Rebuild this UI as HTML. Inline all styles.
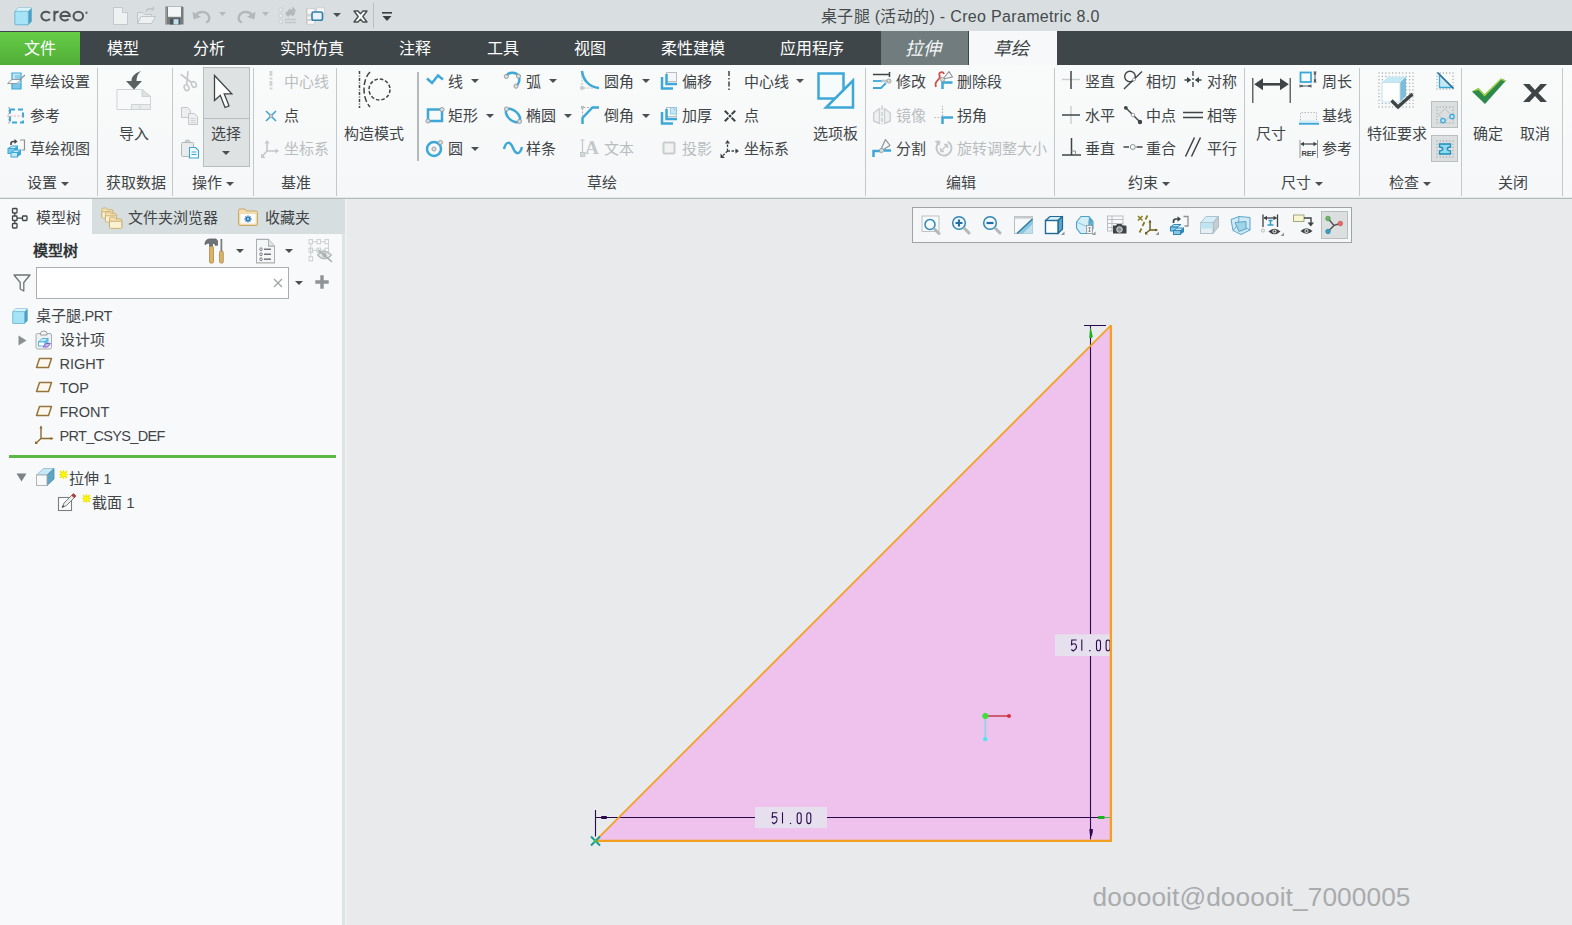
<!DOCTYPE html>
<html lang="zh-CN"><head><meta charset="utf-8"><title>Creo Parametric</title>
<style>
html,body{margin:0;padding:0}
body{width:1572px;height:925px;position:relative;overflow:hidden;background:#e8eaec;
font-family:"Liberation Sans",sans-serif;}
body>div,body>span,body>svg{position:absolute;display:block}
body>span{white-space:nowrap}
svg{overflow:visible}
</style></head><body>
<div style="left:0px;top:0px;width:1572px;height:31px;background:#d9dfe0"></div>
<svg style="left:14.0px;top:5.5px" width="19" height="20" viewBox="0 0 19 20"><path d="M1 5.2L4.2 2H17.5V15.5L14.3 18.7H1Z" fill="#4f9dc0" stroke="#5fb3d3" stroke-width="0.8" stroke-linejoin="round"/><path d="M1 5.2L4.2 2H17.5L14.3 5.2Z" fill="#daf4fc"/><rect x="1" y="5.2" width="13.3" height="13.5" rx="1" fill="#a6e3f7" stroke="#5fb3d3" stroke-width="0.6"/></svg>
<svg style="left:0px;top:0px" width="100" height="31" viewBox="0 0 100 31"><g fill="none" stroke="#4d5356" stroke-width="2"><path d="M49.900 13.200A4.850 4.400 0 1 0 49.900 18.900"/><path d="M54.400 10.800V21.300M54.400 15.300Q54.700 11.600 58.700 11.700"/><path d="M60.400 16.050H69.850A4.750 4.400 0 1 0 68.600 19.100"/><ellipse cx="78.300" cy="16.050" rx="4.800" ry="4.400"/></g><circle cx="86.500" cy="12.800" r="1.200" fill="#6a7073"/></svg>
<svg style="left:111.5px;top:5.5px" width="17" height="20" viewBox="0 0 17 20"><path d="M1.5 1.5H10.5L15.5 6.5V18.5H1.5Z" fill="#eef0f1" stroke="#c3c8ca" stroke-width="1"/><path d="M10.5 1.5V6.5H15.5" fill="#dfe3e4" stroke="#c3c8ca" stroke-width="1"/></svg>
<svg style="left:136.0px;top:5.5px" width="21" height="20" viewBox="0 0 21 20"><path d="M1.5 17.5V6.5H7L9 8.5H15.5V17.5Z" fill="#e6e9ea" stroke="#c0c5c7"/><path d="M1.5 17.5L5 10.5H19.5L15.5 17.5Z" fill="#eef0f1" stroke="#c0c5c7"/><path d="M10 5.5C11.5 2.5 14.5 2 17 3.2M17.5 0.8V3.6H14.6" fill="none" stroke="#c0c5c7" stroke-width="1.4"/></svg>
<svg style="left:165.0px;top:6.0px" width="19" height="19" viewBox="0 0 19 19"><path d="M0.5 0.5H17.500L18.500 1.500V18.500H0.500Z" fill="#767b7e"/><path d="M0.500 0.500H1.800V18.500H0.500Z" fill="#9a9fa1"/><rect x="3" y="0.800" width="13" height="10" fill="#f3f5f6"/><rect x="5" y="12.500" width="10" height="6" fill="#4e5356"/><rect x="8.500" y="13.200" width="5" height="5.300" fill="#bfe0ec"/></svg>
<svg style="left:191.5px;top:9.0px" width="20" height="14" viewBox="0 0 20 14"><path d="M3.5 6.5C7 1.5 15 2 17 7.5C18 10.5 16.5 12.5 14 13.5" fill="none" stroke="#b3b8ba" stroke-width="2.4"/><path d="M0.5 2.5L1.5 10.5L9 8Z" fill="#b3b8ba"/></svg>
<svg style="left:218.5px;top:12.0px" width="7" height="4" viewBox="0 0 7 4"><path d="M0 0H7L3.5 4Z" fill="#b4babc"/></svg>
<svg style="left:235.5px;top:9.0px" width="20" height="14" viewBox="0 0 20 14"><g transform="translate(20,0) scale(-1,1)"><path d="M3.5 6.5C7 1.5 15 2 17 7.5C18 10.5 16.5 12.5 14 13.5" fill="none" stroke="#b3b8ba" stroke-width="2.4"/><path d="M0.5 2.5L1.5 10.5L9 8Z" fill="#b3b8ba"/></g></svg>
<svg style="left:262.0px;top:12.0px" width="7" height="4" viewBox="0 0 7 4"><path d="M0 0H7L3.5 4Z" fill="#b4babc"/></svg>
<svg style="left:278.0px;top:5.5px" width="20" height="20" viewBox="0 0 20 20"><rect x="1" y="2" width="3.400" height="3.400" rx="0.600" fill="#e9ecec" stroke="#c3c8ca" stroke-width="0.800"/><rect x="1" y="8" width="3.400" height="3.400" rx="0.600" fill="#e9ecec" stroke="#c3c8ca" stroke-width="0.800"/><rect x="1" y="14" width="3.400" height="3.400" rx="0.600" fill="#e9ecec" stroke="#c3c8ca" stroke-width="0.800"/><path d="M7 13.500H18M7 16.500H18" stroke="#c3c8ca" stroke-width="1.500"/><path d="M7 7.500L12 2.500L13.800 4.300L14.500 0.500L18.500 5L16 5.500L17.500 7L14.500 10.500L12.500 8.500L10 11Z" fill="#b3b8ba"/></svg>
<svg style="left:305.5px;top:6.5px" width="20" height="18" viewBox="0 0 20 18"><rect x="0.800" y="1.500" width="8" height="6" fill="#f4f6f7" stroke="#c9cdcf" stroke-width="0.800"/><rect x="10.500" y="0.800" width="8" height="6.500" fill="#f4f6f7" stroke="#c9cdcf" stroke-width="0.800"/><rect x="0.800" y="9" width="7" height="3.500" fill="#f4f6f7" stroke="#c9cdcf" stroke-width="0.800"/><rect x="0.800" y="13.500" width="8" height="3.800" fill="#f4f6f7" stroke="#c9cdcf" stroke-width="0.800"/><path d="M0.800 1.500V17" stroke="#d8a8a0" stroke-width="0.600"/><rect x="6" y="5" width="10.500" height="8.200" rx="1.800" fill="#e9f1fa" stroke="#2f7fa8" stroke-width="1.600"/></svg>
<svg style="left:333.0px;top:12.8px" width="8" height="4" viewBox="0 0 8 4"><path d="M0 0H8L4.0 4Z" fill="#4a4f52"/></svg>
<svg style="left:352.5px;top:9.5px" width="15" height="13" viewBox="0 0 15 13"><path d="M1 1H5L7.500 3.800L10 1H14L9.800 6.500L14 12H10L7.500 9.200L5 12H1L5.200 6.500Z" fill="#fbfcfc" stroke="#4a4f52" stroke-width="1.400" stroke-linejoin="round"/></svg>
<div style="left:373px;top:3px;width:1px;height:25px;background:#b9c0c2"></div>
<svg style="left:381.5px;top:12px" width="10" height="10" viewBox="0 0 10 10"><path d="M0 0.8H10" stroke="#3a3f42" stroke-width="1.6"/><path d="M0.5 4H9.5L5 9Z" fill="#3a3f42"/></svg>
<span style="left:821px;top:5.5px;font-size:16px;line-height:22px;color:#454a4d;letter-spacing:0.33px">桌子腿 (活动的) - Creo Parametric 8.0</span>
<div style="left:0px;top:31px;width:1572px;height:34px;background:#3e4649"></div>
<div style="left:0px;top:32px;width:80px;height:33px;background:linear-gradient(180deg,#66cd46 0%,#5bbd3f 50%,#51ac37 100%)"></div>
<span style="left:24px;top:37.5px;font-size:16px;line-height:22px;color:#ffffff;">文件</span>
<span style="left:106.5px;top:37.5px;font-size:16px;line-height:22px;color:#ffffff;">模型</span>
<span style="left:193px;top:37.5px;font-size:16px;line-height:22px;color:#ffffff;">分析</span>
<span style="left:280px;top:37.5px;font-size:16px;line-height:22px;color:#ffffff;">实时仿真</span>
<span style="left:399px;top:37.5px;font-size:16px;line-height:22px;color:#ffffff;">注释</span>
<span style="left:486.5px;top:37.5px;font-size:16px;line-height:22px;color:#ffffff;">工具</span>
<span style="left:573.5px;top:37.5px;font-size:16px;line-height:22px;color:#ffffff;">视图</span>
<span style="left:660.5px;top:37.5px;font-size:16px;line-height:22px;color:#ffffff;">柔性建模</span>
<span style="left:779.5px;top:37.5px;font-size:16px;line-height:22px;color:#ffffff;">应用程序</span>
<div style="left:881px;top:31px;width:87px;height:34px;background:#707c7d"></div>
<div style="left:968px;top:31px;width:1px;height:34px;background:#3e4649"></div>
<div style="left:969px;top:31px;width:88px;height:34px;background:#f6f8f9"></div>
<span style="left:905.5px;top:36.5px;font-size:18px;line-height:24px;color:#f4f6f7;transform:skewX(-14deg)">拉伸</span>
<span style="left:993.5px;top:36.5px;font-size:18px;line-height:24px;color:#3c4144;transform:skewX(-14deg)">草绘</span>
<div style="left:0px;top:65px;width:1572px;height:133px;background:linear-gradient(180deg,#f9fbfb 0%,#f5f7f8 100%)"></div>
<div style="left:0px;top:197px;width:1572px;height:1px;background:#e4e8e9"></div>
<div style="left:0px;top:198px;width:1572px;height:1px;background:#b4b9bb"></div>
<div style="left:97px;top:68px;width:1px;height:128px;background:#c3c8ca"></div>
<div style="left:172px;top:68px;width:1px;height:128px;background:#c3c8ca"></div>
<div style="left:253px;top:68px;width:1px;height:128px;background:#c3c8ca"></div>
<div style="left:336px;top:68px;width:1px;height:128px;background:#c3c8ca"></div>
<div style="left:865px;top:68px;width:1px;height:128px;background:#c3c8ca"></div>
<div style="left:1054px;top:68px;width:1px;height:128px;background:#c3c8ca"></div>
<div style="left:1244px;top:68px;width:1px;height:128px;background:#c3c8ca"></div>
<div style="left:1359px;top:68px;width:1px;height:128px;background:#c3c8ca"></div>
<div style="left:1461px;top:68px;width:1px;height:128px;background:#c3c8ca"></div>
<div style="left:1562px;top:68px;width:1px;height:128px;background:#c3c8ca"></div>
<div style="left:416.5px;top:72px;width:2px;height:89px;background:#b4b9bb"></div>
<svg style="left:6.0px;top:70.5px" width="20" height="20" viewBox="0 0 20 20"><path d="M6 2H15V13H6Z" fill="#c6e8f5" stroke="#3da8d8" stroke-width="1.2"/><path d="M6 12V18H15V13" fill="#7cc8e8" stroke="#3da8d8" stroke-width="1.2"/><path d="M1.5 12.5L6 8.5H15L11 12.5Z" fill="#fafbfb" stroke="#8d9294" stroke-width="0.9"/><path d="M13.5 9L19 4" stroke="#8d9294" stroke-width="1.2"/><path d="M9 5H14M9 7H14" stroke="#3da8d8" stroke-width="0.8"/></svg>
<span style="left:30px;top:72.0px;font-size:15px;line-height:20px;color:#3f4447;">草绘设置</span>
<svg style="left:6.0px;top:106.0px" width="20" height="20" viewBox="0 0 20 20"><rect x="4" y="3.5" width="13" height="13" fill="none" stroke="#3da8d8" stroke-width="2" stroke-dasharray="5 3"/><path d="M3 1V19" stroke="#8d9294" stroke-width="1" stroke-dasharray="1.5 1.5"/><path d="M1 10H19" stroke="#e0a8a8" stroke-width="0.9" stroke-dasharray="2 1.5"/></svg>
<span style="left:30px;top:106.0px;font-size:15px;line-height:20px;color:#3f4447;">参考</span>
<svg style="left:6.0px;top:138.0px" width="20" height="20" viewBox="0 0 20 20"><path d="M2 10.5L6 8H12L8.5 10.5Z" fill="#c6e8f5" stroke="#3da8d8"/><rect x="2" y="10.5" width="6.5" height="5" fill="#7cc8e8" stroke="#3da8d8"/><path d="M8.500 10.5L12 8V13L8.5 15.500Z" fill="#3da8d8"/><path d="M5 14.5L9 12H15L11.5 14.5Z" fill="#c6e8f5" stroke="#3da8d8"/><rect x="5" y="14.5" width="6.5" height="4.5" fill="#c6e8f5" stroke="#3da8d8"/><path d="M11.5 14.5L15 12V16.500L11.5 19Z" fill="#3da8d8"/><path d="M5 7V5.500Q5 3.500 7.5 3.500H9" fill="none" stroke="#3f4446" stroke-width="1.6"/><path d="M8.500 1L11.5 3.500L8.500 6Z" fill="#3f4446"/><path d="M14 2H18.500V12H15.500" fill="none" stroke="#8d9294" stroke-width="1.2"/></svg>
<span style="left:30px;top:139.0px;font-size:15px;line-height:20px;color:#3f4447;">草绘视图</span>
<span style="left:26.5px;top:173.0px;font-size:15px;line-height:20px;color:#3f4447;">设置</span>
<svg style="left:60.5px;top:181.5px" width="8" height="4" viewBox="0 0 8 4"><path d="M0 0H8L4.0 4Z" fill="#4a4f52"/></svg>
<svg style="left:114.5px;top:70.0px" width="38" height="40" viewBox="0 0 38 40"><path d="M2 19.500H27L35.500 26.500V39.500H2Z" fill="#f8f9fa" stroke="#cfd3d5"/><path d="M27 19.500V26.500H35.500Z" fill="#dde1e3" stroke="#cfd3d5"/><path d="M16.500 34.500H35.500V39.500H16.500Z" fill="#e9ecec" stroke="#cfd3d5"/><path d="M25 34.500V39.500" stroke="#cfd3d5"/><path d="M26 1C19 3.500 16.500 7 16.500 11H11L19 19.500L27 11H21.500C21.500 7.500 22.500 4 26 1Z" fill="#5b6063"/></svg>
<span style="left:118.5px;top:123.5px;font-size:15px;line-height:20px;color:#3f4447;">导入</span>
<span style="left:105.5px;top:173.0px;font-size:15px;line-height:20px;color:#3f4447;">获取数据</span>
<svg style="left:179.0px;top:70.5px" width="18" height="20" viewBox="0 0 18 20"><g transform="rotate(-24 9 10)"><path d="M5 1L11.500 12.500M13 1L6.500 12.500" stroke="#c3c7c9" stroke-width="1.600"/><ellipse cx="5" cy="15.500" rx="2.300" ry="3" fill="none" stroke="#c3c7c9" stroke-width="1.500"/><ellipse cx="13" cy="15.500" rx="2.300" ry="3" fill="none" stroke="#c3c7c9" stroke-width="1.500"/></g></svg>
<svg style="left:180.0px;top:106.0px" width="19" height="20" viewBox="0 0 19 20"><path d="M1.500 1.500H7.500L10.500 4.500V11.500H1.500Z" fill="#eceeef" stroke="#c3c7c9"/><path d="M8.500 7.500H14.500L17.500 10.500V18.500H8.500Z" fill="#eceeef" stroke="#c3c7c9"/><path d="M10.500 12.500H15.500M10.500 14.500H15.500M10.500 16.500H15.500" stroke="#c9cdcf" stroke-width="0.8"/></svg>
<svg style="left:179.5px;top:139.0px" width="20" height="20" viewBox="0 0 20 20"><rect x="1.500" y="3.500" width="12" height="14" rx="1" fill="#e9ebec" stroke="#b3b8ba"/><path d="M5 3.500Q5 1 7.500 1Q10 1 10 3.500Z" fill="#d5d8da" stroke="#b3b8ba"/><path d="M9.500 8.500H15.500L18.500 11.500V19H9.500Z" fill="#f6fbfd" stroke="#3da8d8" stroke-width="1.1"/><path d="M11.500 13H16.500M11.500 15.500H16.500" stroke="#3da8d8" stroke-width="1"/></svg>
<div style="left:203px;top:67px;width:47px;height:100px;background:#dfe2e3;border:1px solid #b8bdbf;box-sizing:border-box"></div>
<div style="left:204px;top:118px;width:45px;height:1px;background:#b8bdbf"></div>
<svg style="left:212.5px;top:74.0px" width="20" height="36" viewBox="0 0 20 36"><path d="M1.500 1.500V26.500L7.300 21.300L12 33.500L16 31.800L11.200 19.800H18.800Z" fill="#fff" stroke="#3f4446" stroke-width="1.300" stroke-linejoin="miter"/></svg>
<span style="left:211px;top:123.5px;font-size:15px;line-height:20px;color:#3f4447;">选择</span>
<svg style="left:222.0px;top:150.5px" width="8" height="4" viewBox="0 0 8 4"><path d="M0 0H8L4.0 4Z" fill="#4a4f52"/></svg>
<span style="left:191.5px;top:173.0px;font-size:15px;line-height:20px;color:#3f4447;">操作</span>
<svg style="left:225.5px;top:181.5px" width="8" height="4" viewBox="0 0 8 4"><path d="M0 0H8L4.0 4Z" fill="#4a4f52"/></svg>
<svg style="left:268.5px;top:71.0px" width="4" height="20" viewBox="0 0 4 20"><path d="M2 0V20" stroke="#d0d3d5" stroke-width="2.800" stroke-dasharray="5 1.500 2 1.500"/></svg>
<span style="left:284px;top:72.0px;font-size:15px;line-height:20px;color:#b9bdbf;">中心线</span>
<svg style="left:264.5px;top:109.5px" width="12" height="12" viewBox="0 0 12 12"><path d="M1 1L11 11M11 1L1 11" stroke="#3da8d8" stroke-width="1.600"/><circle cx="6" cy="6" r="1.800" fill="#c9cdcf" stroke="#8d9294" stroke-width="0.600"/></svg>
<span style="left:284px;top:106.0px;font-size:15px;line-height:20px;color:#3f4447;">点</span>
<svg style="left:260.0px;top:138.5px" width="20" height="20" viewBox="0 0 20 20"><path d="M7 12V2M7 12H18M7 12L1.500 18" fill="none" stroke="#c3c7c9" stroke-width="1.600"/><path d="M4.500 4.500L7 1L9.500 4.500ZM15.500 9.500L19 12L15.500 14.500ZM1 14.500V19H5.500Z" fill="#c3c7c9"/></svg>
<span style="left:284px;top:139.0px;font-size:15px;line-height:20px;color:#b9bdbf;">坐标系</span>
<span style="left:280.5px;top:173.0px;font-size:15px;line-height:20px;color:#3f4447;">基准</span>
<svg style="left:356.5px;top:71.0px" width="36" height="38" viewBox="0 0 36 38"><path d="M2.500 0V37" stroke="#3f4446" stroke-width="1.500" stroke-dasharray="3 1.500 1 1.500"/><path d="M13 1C5 9 5 27 13 36" fill="none" stroke="#3f4446" stroke-width="1.500" stroke-dasharray="6 2.500"/><circle cx="22.500" cy="18.500" r="10.500" fill="none" stroke="#3f4446" stroke-width="1.500" stroke-dasharray="3.500 2"/></svg>
<span style="left:344px;top:123.5px;font-size:15px;line-height:20px;color:#3f4447;">构造模式</span>
<svg style="left:425.5px;top:73.5px" width="18" height="10" viewBox="0 0 18 10"><path d="M1 4.500L6 9L12 1.500L17 5.500" fill="none" stroke="#3da8d8" stroke-width="2.500" stroke-linejoin="miter"/></svg>
<span style="left:448px;top:72.0px;font-size:15px;line-height:20px;color:#3f4447;">线</span>
<svg style="left:471.0px;top:79.0px" width="8" height="4" viewBox="0 0 8 4"><path d="M0 0H8L4.0 4Z" fill="#4a4f52"/></svg>
<svg style="left:424.5px;top:106.0px" width="20" height="18" viewBox="0 0 20 18"><rect x="3" y="3.500" width="14" height="11.500" fill="none" stroke="#3da8d8" stroke-width="2.500"/><circle cx="17" cy="3.5" r="2.1" fill="#d8dadb" stroke="#8d9294" stroke-width="0.8"/><circle cx="3" cy="15" r="2.1" fill="#d8dadb" stroke="#8d9294" stroke-width="0.8"/></svg>
<span style="left:448px;top:106.0px;font-size:15px;line-height:20px;color:#3f4447;">矩形</span>
<svg style="left:486.0px;top:113.5px" width="8" height="4" viewBox="0 0 8 4"><path d="M0 0H8L4.0 4Z" fill="#4a4f52"/></svg>
<svg style="left:424.5px;top:139.0px" width="20" height="18" viewBox="0 0 20 18"><circle cx="9" cy="10" r="7" fill="none" stroke="#3da8d8" stroke-width="2.500"/><circle cx="9" cy="10" r="2.1" fill="#d8dadb" stroke="#8d9294" stroke-width="0.8"/><circle cx="15.5" cy="3.5" r="2.1" fill="#d8dadb" stroke="#8d9294" stroke-width="0.8"/></svg>
<span style="left:448px;top:139.0px;font-size:15px;line-height:20px;color:#3f4447;">圆</span>
<svg style="left:471.0px;top:146.5px" width="8" height="4" viewBox="0 0 8 4"><path d="M0 0H8L4.0 4Z" fill="#4a4f52"/></svg>
<svg style="left:503.0px;top:71.0px" width="20" height="18" viewBox="0 0 20 18"><path d="M3.300 5.500C5 0.800 13 0.300 15.500 5C17.300 9 15.800 13 13 15.200" fill="none" stroke="#3da8d8" stroke-width="2.500"/><circle cx="3.3" cy="5.5" r="2.1" fill="#d8dadb" stroke="#8d9294" stroke-width="0.8"/><circle cx="15.5" cy="5.2" r="2.1" fill="#d8dadb" stroke="#8d9294" stroke-width="0.8"/><circle cx="13" cy="15.2" r="2.1" fill="#d8dadb" stroke="#8d9294" stroke-width="0.8"/></svg>
<span style="left:526px;top:72.0px;font-size:15px;line-height:20px;color:#3f4447;">弧</span>
<svg style="left:549.0px;top:79.0px" width="8" height="4" viewBox="0 0 8 4"><path d="M0 0H8L4.0 4Z" fill="#4a4f52"/></svg>
<svg style="left:503.0px;top:106.0px" width="20" height="18" viewBox="0 0 20 18"><ellipse cx="10" cy="9.500" rx="8.500" ry="4.800" transform="rotate(42 10 9.500)" fill="none" stroke="#3da8d8" stroke-width="2.500"/><circle cx="3.5" cy="3" r="2.1" fill="#d8dadb" stroke="#8d9294" stroke-width="0.8"/><circle cx="16.5" cy="15.5" r="2.1" fill="#d8dadb" stroke="#8d9294" stroke-width="0.8"/></svg>
<span style="left:526px;top:106.0px;font-size:15px;line-height:20px;color:#3f4447;">椭圆</span>
<svg style="left:564.0px;top:113.5px" width="8" height="4" viewBox="0 0 8 4"><path d="M0 0H8L4.0 4Z" fill="#4a4f52"/></svg>
<svg style="left:503.0px;top:142.0px" width="20" height="12" viewBox="0 0 20 12"><path d="M1 7C3 -1 7 -1 10 6C13 13 17 13 19 5" fill="none" stroke="#3da8d8" stroke-width="2.500"/></svg>
<span style="left:526px;top:139.0px;font-size:15px;line-height:20px;color:#3f4447;">样条</span>
<svg style="left:580.0px;top:70.0px" width="20" height="20" viewBox="0 0 20 20"><path d="M2 1C3 10 9 17 19 18" fill="none" stroke="#3da8d8" stroke-width="2.500"/><path d="M2 6V18H14" fill="none" stroke="#b8bcbe" stroke-width="1" stroke-dasharray="2 1.500"/><rect x="0.800" y="16.800" width="2.400" height="2.400" fill="#d0d3d5" stroke="#9a9ea0" stroke-width="0.500"/></svg>
<span style="left:604px;top:72.0px;font-size:15px;line-height:20px;color:#3f4447;">圆角</span>
<svg style="left:642.0px;top:79.0px" width="8" height="4" viewBox="0 0 8 4"><path d="M0 0H8L4.0 4Z" fill="#4a4f52"/></svg>
<svg style="left:580.0px;top:105.0px" width="20" height="20" viewBox="0 0 20 20"><path d="M2.500 19V13L12.500 2.500H19" fill="none" stroke="#3da8d8" stroke-width="2.500"/><path d="M2.500 12V2.500H11" fill="none" stroke="#a9adb0" stroke-width="1" stroke-dasharray="2 1.500"/><rect x="1.300" y="1.300" width="2.400" height="2.400" fill="#d0d3d5" stroke="#9a9ea0" stroke-width="0.500"/></svg>
<span style="left:604px;top:106.0px;font-size:15px;line-height:20px;color:#3f4447;">倒角</span>
<svg style="left:642.0px;top:113.5px" width="8" height="4" viewBox="0 0 8 4"><path d="M0 0H8L4.0 4Z" fill="#4a4f52"/></svg>
<svg style="left:580.0px;top:139.0px" width="20" height="18" viewBox="0 0 20 18"><path d="M2.500 1V15M0.500 1H4.500M0.500 15H4.500" stroke="#c3c7c9" stroke-width="1.200"/><rect x="0.500" y="13.500" width="4.500" height="4" fill="#d5d8da" stroke="#b3b8ba" stroke-width="0.600"/><text x="5" y="15" font-family="Liberation Serif" font-weight="bold" font-size="19" fill="#c3c7c9">A</text></svg>
<span style="left:604px;top:139.0px;font-size:15px;line-height:20px;color:#b9bdbf;">文本</span>
<svg style="left:659.5px;top:70.5px" width="18" height="19" viewBox="0 0 18 19"><rect x="6.500" y="1.500" width="10" height="9" fill="#f4f6f7" stroke="#b3b8ba" stroke-width="0.900"/><path d="M2 6V17.500H13" fill="none" stroke="#3da8d8" stroke-width="2.500"/><path d="M6.500 3V13H17" fill="none" stroke="#3da8d8" stroke-width="2.500"/></svg>
<span style="left:682px;top:72.0px;font-size:15px;line-height:20px;color:#3f4447;">偏移</span>
<svg style="left:659.5px;top:105.5px" width="18" height="19" viewBox="0 0 18 19"><rect x="6.500" y="1.500" width="10" height="9" fill="#f4f6f7" stroke="#b3b8ba" stroke-width="0.900"/><path d="M2 6V17.500H13" fill="none" stroke="#3da8d8" stroke-width="2.500"/><path d="M6.500 3V13H17" fill="none" stroke="#3da8d8" stroke-width="2.500"/><path d="M10.500 1.500H16.500V8H10.500Z" fill="#c6e8f5" stroke="#7cc8e8" stroke-width="0.800"/><path d="M13.500 2.500L15.500 4.500" stroke="#c88" stroke-width="0.800"/></svg>
<span style="left:682px;top:106.0px;font-size:15px;line-height:20px;color:#3f4447;">加厚</span>
<svg style="left:660.5px;top:140.0px" width="16" height="16" viewBox="0 0 16 16"><rect x="2.500" y="2.500" width="11" height="11" rx="1" fill="#f1f3f3" stroke="#c9cdcf" stroke-width="2"/></svg>
<span style="left:682px;top:139.0px;font-size:15px;line-height:20px;color:#b9bdbf;">投影</span>
<svg style="left:727.0px;top:71.0px" width="4" height="20" viewBox="0 0 4 20"><path d="M2 0V20" stroke="#3f4446" stroke-width="1.500" stroke-dasharray="5 2 1.500 2"/></svg>
<span style="left:743.5px;top:72.0px;font-size:15px;line-height:20px;color:#3f4447;">中心线</span>
<svg style="left:796.0px;top:79.0px" width="8" height="4" viewBox="0 0 8 4"><path d="M0 0H8L4.0 4Z" fill="#4a4f52"/></svg>
<svg style="left:723.5px;top:109.5px" width="12" height="12" viewBox="0 0 12 12"><path d="M0.800 0.800L4.300 4.300M7.700 7.700L11.200 11.200M11.200 0.800L7.700 4.300M4.300 7.700L0.800 11.200" stroke="#3f4446" stroke-width="2"/><circle cx="6" cy="6" r="1.500" fill="#3f4446"/></svg>
<span style="left:743.5px;top:106.0px;font-size:15px;line-height:20px;color:#3f4447;">点</span>
<svg style="left:718.5px;top:138.5px" width="22" height="20" viewBox="0 0 22 20"><path d="M8.500 12V3M8.500 12H18M8.500 12L3 17.500" fill="none" stroke="#3f4446" stroke-width="1.300" stroke-dasharray="2.500 1.500"/><path d="M6 4.500L8.500 1L11 4.500ZM16.500 9.500L20 12L16.500 14.500ZM1.500 14.500V19H6Z" fill="#3f4446"/></svg>
<span style="left:743.5px;top:139.0px;font-size:15px;line-height:20px;color:#3f4447;">坐标系</span>
<svg style="left:816.5px;top:71.5px" width="38" height="38" viewBox="0 0 38 38"><rect x="1.500" y="1.500" width="25" height="25" fill="#f6fbfd" stroke="#3da8d8" stroke-width="2.500"/><path d="M9 35.500H36V8.500Z" fill="#f6fbfd" stroke="#3da8d8" stroke-width="2.500" stroke-linejoin="miter"/></svg>
<span style="left:813px;top:123.5px;font-size:15px;line-height:20px;color:#3f4447;">选项板</span>
<span style="left:587px;top:173.0px;font-size:15px;line-height:20px;color:#3f4447;">草绘</span>
<svg style="left:872.0px;top:71.5px" width="20" height="18" viewBox="0 0 20 18"><path d="M1 2.500H17.500M17.500 0V5" stroke="#3f4446" stroke-width="1.500"/><path d="M1 9H14" stroke="#3da8d8" stroke-width="1.800"/><path d="M1 16H9L14 11" fill="none" stroke="#3da8d8" stroke-width="1.800"/><path d="M9.500 9H16" stroke="#c3c7c9" stroke-width="2.600"/><circle cx="17" cy="9" r="2.1" fill="#d8dadb" stroke="#8d9294" stroke-width="0.8"/></svg>
<span style="left:896px;top:72.0px;font-size:15px;line-height:20px;color:#3f4447;">修改</span>
<svg style="left:872.0px;top:105.0px" width="20" height="20" viewBox="0 0 20 20"><path d="M10 0.500V19.500" stroke="#c9cdcf" stroke-width="1.500" stroke-dasharray="4.500 1.500"/><path d="M7.500 3.500V18.500L1.700 16V8Z" fill="#eef0f1" stroke="#cdd0d2" stroke-width="1.500" stroke-linejoin="round"/><path d="M12.500 3.500V18.500L18.300 16V8Z" fill="#eef0f1" stroke="#cdd0d2" stroke-width="1.500" stroke-linejoin="round"/></svg>
<span style="left:896px;top:106.0px;font-size:15px;line-height:20px;color:#b9bdbf;">镜像</span>
<svg style="left:872.0px;top:138.0px" width="20" height="20" viewBox="0 0 20 20"><path d="M1.500 19V13H8" fill="none" stroke="#3da8d8" stroke-width="2.500"/><path d="M12 12.500H19" stroke="#3da8d8" stroke-width="2.500"/><path d="M8 13.500L13.500 1.500L18 7.500Z" fill="#f6f8f8" stroke="#8d9294" stroke-width="1.200" stroke-linejoin="round"/><circle cx="9.5" cy="12.5" r="2.1" fill="#d8dadb" stroke="#8d9294" stroke-width="0.8"/></svg>
<span style="left:896px;top:139.0px;font-size:15px;line-height:20px;color:#3f4447;">分割</span>
<svg style="left:934.0px;top:70.0px" width="20" height="20" viewBox="0 0 20 20"><path d="M2 17C-1 10 8 10 5.500 5.500C4 2 9 1 10 4" fill="none" stroke="#d0504a" stroke-width="1.800"/><path d="M8.500 19V12.500H18.500" fill="none" stroke="#3da8d8" stroke-width="2.500"/><path d="M9 9L15 1.500L18.500 7Z" fill="#f6f8f8" stroke="#8d9294" stroke-width="1.100" stroke-linejoin="round"/><circle cx="8.5" cy="9.5" r="2.1" fill="#d8dadb" stroke="#8d9294" stroke-width="0.8"/></svg>
<span style="left:956.5px;top:72.0px;font-size:15px;line-height:20px;color:#3f4447;">删除段</span>
<svg style="left:934.0px;top:105.0px" width="20" height="20" viewBox="0 0 20 20"><path d="M8.500 19V12.500H19" fill="none" stroke="#3da8d8" stroke-width="2.500"/><path d="M8.500 11V1" stroke="#a9adb0" stroke-width="1.200" stroke-dasharray="1.500 1.500"/><path d="M0.500 12.500H7" stroke="#d9a5a5" stroke-width="1.200" stroke-dasharray="1.500 1.500"/></svg>
<span style="left:956.5px;top:106.0px;font-size:15px;line-height:20px;color:#3f4447;">拐角</span>
<svg style="left:934.5px;top:138.5px" width="18" height="18" viewBox="0 0 18 18"><circle cx="9" cy="9" r="7.500" fill="none" stroke="#c3c7c9" stroke-width="2" stroke-dasharray="39 8" transform="rotate(-60 9 9)"/><path d="M5.500 12.500L12.500 5.500M12.500 5.500H9M12.500 5.500V9M5.500 12.500H9M5.500 12.500V9" fill="none" stroke="#c3c7c9" stroke-width="1.300"/><path d="M-0.500 2L5 1.500L4.500 7Z" fill="#c3c7c9"/></svg>
<span style="left:956.5px;top:139.0px;font-size:15px;line-height:20px;color:#b9bdbf;">旋转调整大小</span>
<span style="left:946px;top:173.0px;font-size:15px;line-height:20px;color:#3f4447;">编辑</span>
<svg style="left:1062.0px;top:71.0px" width="18" height="18" viewBox="0 0 18 18"><path d="M0 8.500H18" stroke="#c9cdcf" stroke-width="1.400"/><path d="M9 0V18" stroke="#3f4446" stroke-width="1.500"/></svg>
<span style="left:1085px;top:72.0px;font-size:15px;line-height:20px;color:#3f4447;">竖直</span>
<svg style="left:1062.0px;top:106.0px" width="18" height="18" viewBox="0 0 18 18"><path d="M9 0V18" stroke="#c9cdcf" stroke-width="1.400"/><path d="M0 9H18" stroke="#3f4446" stroke-width="1.500"/></svg>
<span style="left:1085px;top:106.0px;font-size:15px;line-height:20px;color:#3f4447;">水平</span>
<svg style="left:1062.0px;top:138.0px" width="19" height="18" viewBox="0 0 19 18"><path d="M0 17H19M9.500 0V17" stroke="#3f4446" stroke-width="1.500"/><path d="M9.500 13H13.500V17" fill="none" stroke="#8d9294" stroke-width="1"/></svg>
<span style="left:1085px;top:139.0px;font-size:15px;line-height:20px;color:#3f4447;">垂直</span>
<svg style="left:1122.5px;top:70.0px" width="20" height="20" viewBox="0 0 20 20"><circle cx="7" cy="6.500" r="5.300" fill="none" stroke="#3f4446" stroke-width="1.400"/><path d="M1 19L19 1.500" stroke="#3f4446" stroke-width="1.400"/><circle cx="11" cy="9.5" r="1.5" fill="#f6f8f8" stroke="#8d9294" stroke-width="0.8"/></svg>
<span style="left:1145.5px;top:72.0px;font-size:15px;line-height:20px;color:#3f4447;">相切</span>
<svg style="left:1122.5px;top:105.0px" width="20" height="20" viewBox="0 0 20 20"><path d="M2.500 2.500L17.500 17.500" stroke="#3f4446" stroke-width="1.400"/><circle cx="2.800" cy="2.800" r="1.900" fill="#3f4446"/><circle cx="17" cy="17" r="2.200" fill="#3f4446"/><circle cx="10" cy="10" r="1.8" fill="#f6f8f8" stroke="#8d9294" stroke-width="0.8"/></svg>
<span style="left:1145.5px;top:106.0px;font-size:15px;line-height:20px;color:#3f4447;">中点</span>
<svg style="left:1122.5px;top:143.0px" width="20" height="8" viewBox="0 0 20 8"><path d="M0.500 4H6M13.500 4H19.500" stroke="#3f4446" stroke-width="1.500"/><circle cx="9.800" cy="4" r="2.500" fill="#f6f8f8" stroke="#8d9294" stroke-width="1"/></svg>
<span style="left:1145.5px;top:139.0px;font-size:15px;line-height:20px;color:#3f4447;">重合</span>
<svg style="left:1183.5px;top:71.0px" width="18" height="18" viewBox="0 0 18 18"><path d="M9 0V18" stroke="#3f4446" stroke-width="1.400" stroke-dasharray="5 2 2 2"/><path d="M0.500 9H5M17.500 9H13" stroke="#3f4446" stroke-width="1.300"/><path d="M3 6L7.300 9L3 12ZM15 6L10.700 9L15 12Z" fill="#3f4446"/></svg>
<span style="left:1206.5px;top:72.0px;font-size:15px;line-height:20px;color:#3f4447;">对称</span>
<svg style="left:1183.0px;top:111.0px" width="20" height="8" viewBox="0 0 20 8"><path d="M0 1.500H20M0 6.500H20" stroke="#3f4446" stroke-width="1.500"/></svg>
<span style="left:1206.5px;top:106.0px;font-size:15px;line-height:20px;color:#3f4447;">相等</span>
<svg style="left:1184.0px;top:137.0px" width="18" height="20" viewBox="0 0 18 20"><path d="M1.500 19.500L10.500 0.500M7.500 19.500L16.500 0.500" stroke="#3f4446" stroke-width="1.500"/></svg>
<span style="left:1206.5px;top:139.0px;font-size:15px;line-height:20px;color:#3f4447;">平行</span>
<span style="left:1128px;top:173.0px;font-size:15px;line-height:20px;color:#3f4447;">约束</span>
<svg style="left:1162.0px;top:181.5px" width="8" height="4" viewBox="0 0 8 4"><path d="M0 0H8L4.0 4Z" fill="#4a4f52"/></svg>
<svg style="left:1252.0px;top:77.5px" width="39" height="25" viewBox="0 0 39 25"><path d="M0.800 0V25M38.200 0V25" stroke="#3f4446" stroke-width="1.200"/><path d="M8 6.300H31" stroke="#3f4446" stroke-width="2.600"/><path d="M2.200 6.300L11 0.300V12.300ZM36.800 6.300L28 0.300V12.300Z" fill="#3f4446"/></svg>
<span style="left:1256px;top:123.5px;font-size:15px;line-height:20px;color:#3f4447;">尺寸</span>
<svg style="left:1298.5px;top:70.5px" width="20" height="18" viewBox="0 0 20 18"><rect x="1.500" y="1.500" width="10.500" height="9.500" fill="#f6fbfd" stroke="#3da8d8" stroke-width="1.800"/><path d="M16 1V11M14.500 1H17.500M14.500 11H17.500M1 15H12M1 13.500V16.500M12 13.500V16.500" stroke="#3f4446" stroke-width="0.900" fill="none"/><path d="M16 1L14.600 3.500H17.400ZM16 11L14.600 8.500H17.400ZM1 15L3.500 13.800V16.200ZM12 15L9.500 13.800V16.200Z" fill="#3f4446"/></svg>
<span style="left:1321.5px;top:72.0px;font-size:15px;line-height:20px;color:#3f4447;">周长</span>
<svg style="left:1298.5px;top:111.0px" width="20" height="14" viewBox="0 0 20 14"><path d="M1.500 12.500V1.500H17.500V12.500" fill="#f4f6f7" stroke="#b8bcbe" stroke-width="1" stroke-dasharray="1.500 1.500"/><path d="M0 12V9.500H20V12Z" fill="#d4ecf6"/><path d="M0 12.800H20" stroke="#3da8d8" stroke-width="1.800"/></svg>
<span style="left:1321.5px;top:106.0px;font-size:15px;line-height:20px;color:#3f4447;">基线</span>
<svg style="left:1298.5px;top:140.0px" width="20" height="18" viewBox="0 0 20 18"><path d="M1 0V18M18.500 0V18" stroke="#8d9294" stroke-width="1"/><path d="M2 4H17.500" stroke="#3f4446" stroke-width="1.200"/><path d="M1.500 4L5 1.800V6.200ZM18 4L14.500 1.800V6.200Z" fill="#3f4446"/><text x="2.600" y="15.500" font-family="Liberation Sans" font-weight="bold" font-size="7.500" fill="#3f4446" letter-spacing="-0.2">REF</text></svg>
<span style="left:1321.5px;top:139.0px;font-size:15px;line-height:20px;color:#3f4447;">参考</span>
<span style="left:1280.5px;top:173.0px;font-size:15px;line-height:20px;color:#3f4447;">尺寸</span>
<svg style="left:1314.5px;top:181.5px" width="8" height="4" viewBox="0 0 8 4"><path d="M0 0H8L4.0 4Z" fill="#4a4f52"/></svg>
<svg style="left:1377.0px;top:71.0px" width="38" height="38" viewBox="0 0 38 38"><circle cx="2.0" cy="2.0" r="0.7" fill="#a4a8aa"/><circle cx="2.0" cy="5.4" r="0.7" fill="#a4a8aa"/><circle cx="2.0" cy="8.8" r="0.7" fill="#a4a8aa"/><circle cx="2.0" cy="12.2" r="0.7" fill="#a4a8aa"/><circle cx="2.0" cy="15.6" r="0.7" fill="#a4a8aa"/><circle cx="2.0" cy="19.0" r="0.7" fill="#a4a8aa"/><circle cx="2.0" cy="22.4" r="0.7" fill="#a4a8aa"/><circle cx="2.0" cy="25.8" r="0.7" fill="#a4a8aa"/><circle cx="2.0" cy="29.2" r="0.7" fill="#a4a8aa"/><circle cx="2.0" cy="32.6" r="0.7" fill="#a4a8aa"/><circle cx="2.0" cy="36.0" r="0.7" fill="#a4a8aa"/><circle cx="5.4" cy="2.0" r="0.7" fill="#a4a8aa"/><circle cx="5.4" cy="5.4" r="0.7" fill="#a4a8aa"/><circle cx="5.4" cy="8.8" r="0.7" fill="#a4a8aa"/><circle cx="5.4" cy="12.2" r="0.7" fill="#a4a8aa"/><circle cx="5.4" cy="15.6" r="0.7" fill="#a4a8aa"/><circle cx="5.4" cy="19.0" r="0.7" fill="#a4a8aa"/><circle cx="5.4" cy="22.4" r="0.7" fill="#a4a8aa"/><circle cx="5.4" cy="25.8" r="0.7" fill="#a4a8aa"/><circle cx="5.4" cy="29.2" r="0.7" fill="#a4a8aa"/><circle cx="5.4" cy="32.6" r="0.7" fill="#a4a8aa"/><circle cx="5.4" cy="36.0" r="0.7" fill="#a4a8aa"/><circle cx="8.8" cy="2.0" r="0.7" fill="#a4a8aa"/><circle cx="8.8" cy="5.4" r="0.7" fill="#a4a8aa"/><circle cx="8.8" cy="8.8" r="0.7" fill="#a4a8aa"/><circle cx="8.8" cy="12.2" r="0.7" fill="#a4a8aa"/><circle cx="8.8" cy="15.6" r="0.7" fill="#a4a8aa"/><circle cx="8.8" cy="19.0" r="0.7" fill="#a4a8aa"/><circle cx="8.8" cy="22.4" r="0.7" fill="#a4a8aa"/><circle cx="8.8" cy="25.8" r="0.7" fill="#a4a8aa"/><circle cx="8.8" cy="29.2" r="0.7" fill="#a4a8aa"/><circle cx="8.8" cy="32.6" r="0.7" fill="#a4a8aa"/><circle cx="8.8" cy="36.0" r="0.7" fill="#a4a8aa"/><circle cx="12.2" cy="2.0" r="0.7" fill="#a4a8aa"/><circle cx="12.2" cy="5.4" r="0.7" fill="#a4a8aa"/><circle cx="12.2" cy="8.8" r="0.7" fill="#a4a8aa"/><circle cx="12.2" cy="12.2" r="0.7" fill="#a4a8aa"/><circle cx="12.2" cy="15.6" r="0.7" fill="#a4a8aa"/><circle cx="12.2" cy="19.0" r="0.7" fill="#a4a8aa"/><circle cx="12.2" cy="22.4" r="0.7" fill="#a4a8aa"/><circle cx="12.2" cy="25.8" r="0.7" fill="#a4a8aa"/><circle cx="12.2" cy="29.2" r="0.7" fill="#a4a8aa"/><circle cx="12.2" cy="32.6" r="0.7" fill="#a4a8aa"/><circle cx="12.2" cy="36.0" r="0.7" fill="#a4a8aa"/><circle cx="15.6" cy="2.0" r="0.7" fill="#a4a8aa"/><circle cx="15.6" cy="5.4" r="0.7" fill="#a4a8aa"/><circle cx="15.6" cy="8.8" r="0.7" fill="#a4a8aa"/><circle cx="15.6" cy="12.2" r="0.7" fill="#a4a8aa"/><circle cx="15.6" cy="15.6" r="0.7" fill="#a4a8aa"/><circle cx="15.6" cy="19.0" r="0.7" fill="#a4a8aa"/><circle cx="15.6" cy="22.4" r="0.7" fill="#a4a8aa"/><circle cx="15.6" cy="25.8" r="0.7" fill="#a4a8aa"/><circle cx="15.6" cy="29.2" r="0.7" fill="#a4a8aa"/><circle cx="15.6" cy="32.6" r="0.7" fill="#a4a8aa"/><circle cx="15.6" cy="36.0" r="0.7" fill="#a4a8aa"/><circle cx="19.0" cy="2.0" r="0.7" fill="#a4a8aa"/><circle cx="19.0" cy="5.4" r="0.7" fill="#a4a8aa"/><circle cx="19.0" cy="8.8" r="0.7" fill="#a4a8aa"/><circle cx="19.0" cy="12.2" r="0.7" fill="#a4a8aa"/><circle cx="19.0" cy="15.6" r="0.7" fill="#a4a8aa"/><circle cx="19.0" cy="19.0" r="0.7" fill="#a4a8aa"/><circle cx="19.0" cy="22.4" r="0.7" fill="#a4a8aa"/><circle cx="19.0" cy="25.8" r="0.7" fill="#a4a8aa"/><circle cx="19.0" cy="29.2" r="0.7" fill="#a4a8aa"/><circle cx="19.0" cy="32.6" r="0.7" fill="#a4a8aa"/><circle cx="19.0" cy="36.0" r="0.7" fill="#a4a8aa"/><circle cx="22.4" cy="2.0" r="0.7" fill="#a4a8aa"/><circle cx="22.4" cy="5.4" r="0.7" fill="#a4a8aa"/><circle cx="22.4" cy="8.8" r="0.7" fill="#a4a8aa"/><circle cx="22.4" cy="12.2" r="0.7" fill="#a4a8aa"/><circle cx="22.4" cy="15.6" r="0.7" fill="#a4a8aa"/><circle cx="22.4" cy="19.0" r="0.7" fill="#a4a8aa"/><circle cx="22.4" cy="22.4" r="0.7" fill="#a4a8aa"/><circle cx="22.4" cy="25.8" r="0.7" fill="#a4a8aa"/><circle cx="22.4" cy="29.2" r="0.7" fill="#a4a8aa"/><circle cx="22.4" cy="32.6" r="0.7" fill="#a4a8aa"/><circle cx="22.4" cy="36.0" r="0.7" fill="#a4a8aa"/><circle cx="25.8" cy="2.0" r="0.7" fill="#a4a8aa"/><circle cx="25.8" cy="5.4" r="0.7" fill="#a4a8aa"/><circle cx="25.8" cy="8.8" r="0.7" fill="#a4a8aa"/><circle cx="25.8" cy="12.2" r="0.7" fill="#a4a8aa"/><circle cx="25.8" cy="15.6" r="0.7" fill="#a4a8aa"/><circle cx="25.8" cy="19.0" r="0.7" fill="#a4a8aa"/><circle cx="25.8" cy="22.4" r="0.7" fill="#a4a8aa"/><circle cx="25.8" cy="25.8" r="0.7" fill="#a4a8aa"/><circle cx="25.8" cy="29.2" r="0.7" fill="#a4a8aa"/><circle cx="25.8" cy="32.6" r="0.7" fill="#a4a8aa"/><circle cx="25.8" cy="36.0" r="0.7" fill="#a4a8aa"/><circle cx="29.2" cy="2.0" r="0.7" fill="#a4a8aa"/><circle cx="29.2" cy="5.4" r="0.7" fill="#a4a8aa"/><circle cx="29.2" cy="8.8" r="0.7" fill="#a4a8aa"/><circle cx="29.2" cy="12.2" r="0.7" fill="#a4a8aa"/><circle cx="29.2" cy="15.6" r="0.7" fill="#a4a8aa"/><circle cx="29.2" cy="19.0" r="0.7" fill="#a4a8aa"/><circle cx="29.2" cy="22.4" r="0.7" fill="#a4a8aa"/><circle cx="29.2" cy="25.8" r="0.7" fill="#a4a8aa"/><circle cx="29.2" cy="29.2" r="0.7" fill="#a4a8aa"/><circle cx="29.2" cy="32.6" r="0.7" fill="#a4a8aa"/><circle cx="29.2" cy="36.0" r="0.7" fill="#a4a8aa"/><circle cx="32.6" cy="2.0" r="0.7" fill="#a4a8aa"/><circle cx="32.6" cy="5.4" r="0.7" fill="#a4a8aa"/><circle cx="32.6" cy="8.8" r="0.7" fill="#a4a8aa"/><circle cx="32.6" cy="12.2" r="0.7" fill="#a4a8aa"/><circle cx="32.6" cy="15.6" r="0.7" fill="#a4a8aa"/><circle cx="32.6" cy="19.0" r="0.7" fill="#a4a8aa"/><circle cx="32.6" cy="22.4" r="0.7" fill="#a4a8aa"/><circle cx="32.6" cy="25.8" r="0.7" fill="#a4a8aa"/><circle cx="32.6" cy="29.2" r="0.7" fill="#a4a8aa"/><circle cx="32.6" cy="32.6" r="0.7" fill="#a4a8aa"/><circle cx="32.6" cy="36.0" r="0.7" fill="#a4a8aa"/><circle cx="36.0" cy="2.0" r="0.7" fill="#a4a8aa"/><circle cx="36.0" cy="5.4" r="0.7" fill="#a4a8aa"/><circle cx="36.0" cy="8.8" r="0.7" fill="#a4a8aa"/><circle cx="36.0" cy="12.2" r="0.7" fill="#a4a8aa"/><circle cx="36.0" cy="15.6" r="0.7" fill="#a4a8aa"/><circle cx="36.0" cy="19.0" r="0.7" fill="#a4a8aa"/><circle cx="36.0" cy="22.4" r="0.7" fill="#a4a8aa"/><circle cx="36.0" cy="25.8" r="0.7" fill="#a4a8aa"/><circle cx="36.0" cy="29.2" r="0.7" fill="#a4a8aa"/><circle cx="36.0" cy="32.6" r="0.7" fill="#a4a8aa"/><circle cx="36.0" cy="36.0" r="0.7" fill="#a4a8aa"/><path d="M5 11.500L11 5.500H29V25L23 31H5Z" fill="#fff"/><path d="M23 11.500L29 5.500V25L23 31Z" fill="#7fbcd9"/><path d="M5 11.500L11 5.500H29L23 11.500Z" fill="#c6e8f5"/><rect x="5" y="11.500" width="18" height="19.500" fill="#fdfefe" stroke="#b9dcea" stroke-width="0.800"/><path d="M14.500 29.500L21 36L35.500 23" fill="none" stroke="#3f4446" stroke-width="3.300"/></svg>
<span style="left:1367px;top:123.5px;font-size:15px;line-height:20px;color:#3f4447;">特征要求</span>
<svg style="left:1434.5px;top:71.0px" width="20" height="20" viewBox="0 0 20 20"><circle cx="2.0" cy="2.0" r="0.7" fill="#a4a8aa"/><circle cx="2.0" cy="5.2" r="0.7" fill="#a4a8aa"/><circle cx="2.0" cy="8.4" r="0.7" fill="#a4a8aa"/><circle cx="2.0" cy="11.6" r="0.7" fill="#a4a8aa"/><circle cx="2.0" cy="14.8" r="0.7" fill="#a4a8aa"/><circle cx="2.0" cy="18.0" r="0.7" fill="#a4a8aa"/><circle cx="5.2" cy="2.0" r="0.7" fill="#a4a8aa"/><circle cx="5.2" cy="18.0" r="0.7" fill="#a4a8aa"/><circle cx="8.4" cy="2.0" r="0.7" fill="#a4a8aa"/><circle cx="8.4" cy="18.0" r="0.7" fill="#a4a8aa"/><circle cx="11.6" cy="2.0" r="0.7" fill="#a4a8aa"/><circle cx="11.6" cy="18.0" r="0.7" fill="#a4a8aa"/><circle cx="14.8" cy="2.0" r="0.7" fill="#a4a8aa"/><circle cx="14.8" cy="18.0" r="0.7" fill="#a4a8aa"/><circle cx="18.0" cy="2.0" r="0.7" fill="#a4a8aa"/><circle cx="18.0" cy="5.2" r="0.7" fill="#a4a8aa"/><circle cx="18.0" cy="8.4" r="0.7" fill="#a4a8aa"/><circle cx="18.0" cy="11.6" r="0.7" fill="#a4a8aa"/><circle cx="18.0" cy="14.8" r="0.7" fill="#a4a8aa"/><circle cx="18.0" cy="18.0" r="0.7" fill="#a4a8aa"/><path d="M4.500 3.500V16.500H17.500Z" fill="#c6e8f5" stroke="#3da8d8" stroke-width="1.300"/><path d="M2.500 1.500L18.500 17.500" stroke="#2b6f98" stroke-width="1.600"/></svg>
<div style="left:1431px;top:101px;width:27px;height:27px;background:#dcdfe0;border:1px solid #b8bdbf;box-sizing:border-box"></div>
<svg style="left:1434.5px;top:104.5px" width="20" height="20" viewBox="0 0 20 20"><circle cx="2.0" cy="2.0" r="0.7" fill="#a4a8aa"/><circle cx="2.0" cy="5.2" r="0.7" fill="#a4a8aa"/><circle cx="2.0" cy="8.4" r="0.7" fill="#a4a8aa"/><circle cx="2.0" cy="11.6" r="0.7" fill="#a4a8aa"/><circle cx="2.0" cy="14.8" r="0.7" fill="#a4a8aa"/><circle cx="2.0" cy="18.0" r="0.7" fill="#a4a8aa"/><circle cx="5.2" cy="2.0" r="0.7" fill="#a4a8aa"/><circle cx="5.2" cy="18.0" r="0.7" fill="#a4a8aa"/><circle cx="8.4" cy="2.0" r="0.7" fill="#a4a8aa"/><circle cx="8.4" cy="18.0" r="0.7" fill="#a4a8aa"/><circle cx="11.6" cy="2.0" r="0.7" fill="#a4a8aa"/><circle cx="11.6" cy="18.0" r="0.7" fill="#a4a8aa"/><circle cx="14.8" cy="2.0" r="0.7" fill="#a4a8aa"/><circle cx="14.8" cy="18.0" r="0.7" fill="#a4a8aa"/><circle cx="18.0" cy="2.0" r="0.7" fill="#a4a8aa"/><circle cx="18.0" cy="5.2" r="0.7" fill="#a4a8aa"/><circle cx="18.0" cy="8.4" r="0.7" fill="#a4a8aa"/><circle cx="18.0" cy="11.6" r="0.7" fill="#a4a8aa"/><circle cx="18.0" cy="14.8" r="0.7" fill="#a4a8aa"/><circle cx="18.0" cy="18.0" r="0.7" fill="#a4a8aa"/><path d="M3.500 10L10 3.500L16.500 10L10 16.500Z" fill="none" stroke="#c9cdcf" stroke-width="1.200"/><circle cx="8" cy="15.500" r="2.200" fill="#c6e8f5" stroke="#3da8d8" stroke-width="1.300"/><circle cx="17" cy="11.500" r="2.200" fill="#c6e8f5" stroke="#3da8d8" stroke-width="1.300"/></svg>
<div style="left:1431px;top:135px;width:27px;height:27px;background:#dcdfe0;border:1px solid #b8bdbf;box-sizing:border-box"></div>
<svg style="left:1434.5px;top:138.5px" width="20" height="20" viewBox="0 0 20 20"><circle cx="2.0" cy="2.0" r="0.7" fill="#a4a8aa"/><circle cx="2.0" cy="5.2" r="0.7" fill="#a4a8aa"/><circle cx="2.0" cy="8.4" r="0.7" fill="#a4a8aa"/><circle cx="2.0" cy="11.6" r="0.7" fill="#a4a8aa"/><circle cx="2.0" cy="14.8" r="0.7" fill="#a4a8aa"/><circle cx="2.0" cy="18.0" r="0.7" fill="#a4a8aa"/><circle cx="5.2" cy="2.0" r="0.7" fill="#a4a8aa"/><circle cx="5.2" cy="18.0" r="0.7" fill="#a4a8aa"/><circle cx="8.4" cy="2.0" r="0.7" fill="#a4a8aa"/><circle cx="8.4" cy="18.0" r="0.7" fill="#a4a8aa"/><circle cx="11.6" cy="2.0" r="0.7" fill="#a4a8aa"/><circle cx="11.6" cy="18.0" r="0.7" fill="#a4a8aa"/><circle cx="14.8" cy="2.0" r="0.7" fill="#a4a8aa"/><circle cx="14.8" cy="18.0" r="0.7" fill="#a4a8aa"/><circle cx="18.0" cy="2.0" r="0.7" fill="#a4a8aa"/><circle cx="18.0" cy="5.2" r="0.7" fill="#a4a8aa"/><circle cx="18.0" cy="8.4" r="0.7" fill="#a4a8aa"/><circle cx="18.0" cy="11.6" r="0.7" fill="#a4a8aa"/><circle cx="18.0" cy="14.8" r="0.7" fill="#a4a8aa"/><circle cx="18.0" cy="18.0" r="0.7" fill="#a4a8aa"/><path d="M4.500 5H15.500V8Q12.300 8.300 12.300 10Q12.300 11.700 15.500 12V15H4.500V12Q7.700 11.700 7.700 10Q7.700 8.300 4.500 8Z" fill="#8fd8f0" stroke="#1f8fb8" stroke-width="1.300"/></svg>
<span style="left:1389px;top:173.0px;font-size:15px;line-height:20px;color:#3f4447;">检查</span>
<svg style="left:1423.0px;top:181.5px" width="8" height="4" viewBox="0 0 8 4"><path d="M0 0H8L4.0 4Z" fill="#4a4f52"/></svg>
<svg style="left:1471.0px;top:76.5px" width="36" height="28" viewBox="0 0 36 28"><path d="M1 14.500L7.500 11L13.500 17.500L30 1.500L35 3.500L14 27Z" fill="#2d8a4b"/><path d="M1 14.500L7.500 11L13.500 17.500L30 1.500L35 3.500L34 4.300L30 3L13.500 19.500L7.500 13Z" fill="#a6d63a"/></svg>
<span style="left:1473px;top:123.5px;font-size:15px;line-height:20px;color:#3f4447;">确定</span>
<svg style="left:1522.0px;top:82.5px" width="26" height="20" viewBox="0 0 26 20"><path d="M1 1H7.500L13 7L18.500 1H25L16.300 10L25 19H18.500L13 13L7.500 19H1L9.700 10Z" fill="#3f4446"/></svg>
<span style="left:1520px;top:123.5px;font-size:15px;line-height:20px;color:#3f4447;">取消</span>
<span style="left:1498px;top:173.0px;font-size:15px;line-height:20px;color:#3f4447;">关闭</span>
<div style="left:0px;top:199px;width:342px;height:726px;background:#f8f9fa"></div>
<div style="left:342px;top:199px;width:3px;height:726px;background:#dfe3e5"></div>
<div style="left:0px;top:199px;width:345px;height:35px;background:#d7dee0"></div>
<div style="left:0px;top:199px;width:92px;height:35px;background:#f8f9fa"></div>
<div style="left:345px;top:199px;width:2px;height:726px;background:#eef0f1"></div>
<svg style="left:11.0px;top:206.5px" width="18" height="22" viewBox="0 0 18 22"><rect x="1.500" y="1.500" width="4.500" height="4.500" rx="0.800" fill="none" stroke="#3f4446" stroke-width="1.300"/><rect x="1.500" y="9" width="4.500" height="4.500" rx="0.800" fill="none" stroke="#3f4446" stroke-width="1.300"/><rect x="1.500" y="16.500" width="4.500" height="4.500" rx="0.800" fill="none" stroke="#3f4446" stroke-width="1.300"/><rect x="11.500" y="9" width="4.500" height="4.500" rx="0.800" fill="none" stroke="#3f4446" stroke-width="1.300"/><path d="M3.800 6V9M3.800 13.500V16.500M6 11.200H11.500" stroke="#3f4446" stroke-width="1.200"/></svg>
<span style="left:35.5px;top:207.5px;font-size:15px;line-height:20px;color:#3f4447;">模型树</span>
<svg style="left:100.5px;top:206.5px" width="23" height="22" viewBox="0 0 23 22"><g transform="translate(0.5,0.5) scale(0.85)"><path d="M0.500 11.500V2Q0.500 0.500 2 0.500H5.500L7 2.500H12Q13.500 2.500 13.500 4V11.500Z" fill="#f3dfae" stroke="#c9a86a" stroke-width="0.900"/><path d="M0.500 11.500V5H13.500V11.500Q13.500 12.500 12.500 12.500H1.500Q0.500 12.500 0.500 11.500Z" fill="#fbf1d3" stroke="#c9a86a" stroke-width="0.900"/></g><g transform="translate(4,4.5) scale(0.85)"><path d="M0.500 11.500V2Q0.500 0.500 2 0.500H5.500L7 2.500H12Q13.500 2.500 13.500 4V11.500Z" fill="#f3dfae" stroke="#c9a86a" stroke-width="0.900"/><path d="M0.500 11.500V5H13.500V11.500Q13.500 12.500 12.500 12.500H1.500Q0.500 12.500 0.500 11.500Z" fill="#fbf1d3" stroke="#c9a86a" stroke-width="0.900"/></g><g transform="translate(8,9.5) scale(0.95)"><path d="M0.500 11.500V2Q0.500 0.500 2 0.500H5.500L7 2.500H12Q13.500 2.500 13.500 4V11.500Z" fill="#f3dfae" stroke="#c9a86a" stroke-width="0.900"/><path d="M0.500 11.500V5H13.500V11.500Q13.500 12.500 12.500 12.500H1.500Q0.500 12.500 0.500 11.500Z" fill="#fbf1d3" stroke="#c9a86a" stroke-width="0.900"/></g></svg>
<span style="left:128px;top:207.5px;font-size:15px;line-height:20px;color:#3f4447;">文件夹浏览器</span>
<svg style="left:238.0px;top:208.0px" width="20" height="18" viewBox="0 0 20 18"><path d="M0.500 16V2.500Q0.500 1 2 1H7L8.500 3H18Q19.500 3 19.500 4.500V16Q19.500 17.500 18 17.500H2Q0.500 17.500 0.500 16Z" fill="#f3dfae" stroke="#c9a86a"/><rect x="2" y="5.500" width="16" height="10.500" fill="#fdfdfb" stroke="#e3d2a4" stroke-width="0.600"/><path d="M10 7.500V14.500M6.500 11H13.500M7.500 8.500L12.500 13.500M12.500 8.500L7.500 13.500" stroke="#2b6fb5" stroke-width="1.300"/><circle cx="10" cy="11" r="1.200" fill="#7fd0f0"/></svg>
<span style="left:265px;top:207.5px;font-size:15px;line-height:20px;color:#3f4447;">收藏夹</span>
<span style="left:32.5px;top:240.5px;font-size:15px;line-height:20px;color:#2f3437;font-weight:bold">模型树</span>
<svg style="left:204.0px;top:238.5px" width="22" height="24" viewBox="0 0 22 24"><g transform="translate(0,-1.800) scale(1,1.150)"><path d="M1 5.500Q1.500 1.500 6 1.500H12L13.500 3V7H11V5.500H8.500V8H5.500V5Q3 5 1 6.500Z" fill="#6e7477" stroke="#4e5356" stroke-width="0.600"/><rect x="5.500" y="8" width="4" height="14.500" rx="1.200" fill="#d9b36a" stroke="#a8843f" stroke-width="0.700"/><rect x="16.500" y="1.500" width="1.800" height="11" fill="#7a7f82"/><rect x="15.500" y="12" width="3.800" height="10.500" rx="1.300" fill="#d9b36a" stroke="#a8843f" stroke-width="0.700"/></g></svg>
<svg style="left:236.0px;top:248.5px" width="8" height="4" viewBox="0 0 8 4"><path d="M0 0H8L4.0 4Z" fill="#4a4f52"/></svg>
<svg style="left:254.5px;top:240.0px" width="21" height="22" viewBox="0 0 21 22"><g transform="translate(0,-2.500) scale(1,1.240)"><path d="M1.500 1.500H13.500L19.500 7V20.500H1.500Z" fill="#f4f6f7" stroke="#a9aeb0"/><path d="M13.500 1.500V7H19.500" fill="#e3e6e8" stroke="#a9aeb0"/><circle cx="6" cy="9.5" r="1.200" fill="none" stroke="#6e7477" stroke-width="0.800"/><path d="M9 9.5H16" stroke="#6e7477" stroke-width="1.200"/><circle cx="6" cy="13.5" r="1.200" fill="none" stroke="#6e7477" stroke-width="0.800"/><path d="M9 13.5H16" stroke="#6e7477" stroke-width="1.200"/><circle cx="6" cy="17.5" r="1.200" fill="none" stroke="#6e7477" stroke-width="0.800"/><path d="M9 17.5H16" stroke="#6e7477" stroke-width="1.200"/></g></svg>
<svg style="left:285.0px;top:248.5px" width="8" height="4" viewBox="0 0 8 4"><path d="M0 0H8L4.0 4Z" fill="#4a4f52"/></svg>
<svg style="left:307.5px;top:240.0px" width="25" height="22" viewBox="0 0 25 22"><g transform="translate(0,-1.500) scale(1,1.140)"><rect x="1" y="1" width="3.600" height="3.600" fill="none" stroke="#c9cdcf" stroke-width="0.900"/><rect x="1" y="8.5" width="3.600" height="3.600" fill="none" stroke="#c9cdcf" stroke-width="0.900"/><rect x="1" y="16" width="3.600" height="3.600" fill="none" stroke="#c9cdcf" stroke-width="0.900"/><rect x="9" y="1" width="3.600" height="3.600" fill="none" stroke="#c9cdcf" stroke-width="0.900"/><rect x="9" y="8.5" width="3.600" height="3.600" fill="none" stroke="#c9cdcf" stroke-width="0.900"/><rect x="17" y="1" width="3.600" height="3.600" fill="none" stroke="#c9cdcf" stroke-width="0.900"/><rect x="17" y="8.5" width="3.600" height="3.600" fill="none" stroke="#c9cdcf" stroke-width="0.900"/><path d="M2.800 4.600V16M4.600 10.300H9M4.600 2.800H9M12.600 2.800H17M12.600 10.300H17M20.600 4.600V10" stroke="#c9cdcf" stroke-width="0.900"/><path d="M9.500 14.500Q16.500 8 23.500 14.500Q16.500 21 9.500 14.500Z" fill="#e6e8e9" stroke="#b3b8ba" stroke-width="1"/><circle cx="16.500" cy="14.500" r="2.200" fill="#b3b8ba"/><path d="M10 10L24 20.500" stroke="#a9aeb0" stroke-width="1.400"/></g></svg>
<svg style="left:13.0px;top:273.5px" width="18" height="18" viewBox="0 0 18 18"><path d="M1 1H17L10.800 8.500V17L7.200 15V8.500Z" fill="#f6f8f8" stroke="#6e7477" stroke-width="1.300" stroke-linejoin="round"/></svg>
<div style="left:36px;top:267px;width:253px;height:32px;background:#fff;border:1px solid #a9aeb0;box-sizing:border-box"></div>
<svg style="left:273px;top:278px" width="10" height="10" viewBox="0 0 10 10"><path d="M1 1L9 9M9 1L1 9" stroke="#a0a4a6" stroke-width="1.3"/></svg>
<svg style="left:295.0px;top:281.0px" width="8" height="4" viewBox="0 0 8 4"><path d="M0 0H8L4.0 4Z" fill="#4a4f52"/></svg>
<svg style="left:315px;top:275.2px" width="14" height="14" viewBox="0 0 14 14"><path d="M7 0.300V13.700M0.300 7H13.700" stroke="#8f9496" stroke-width="3.400"/></svg>
<svg style="left:12.0px;top:307.0px" width="17" height="18" viewBox="0 0 17 18"><g transform="scale(0.88)"><path d="M1 5.2L4.2 2H17.5V15.5L14.3 18.7H1Z" fill="#4f9dc0" stroke="#5fb3d3" stroke-width="0.8" stroke-linejoin="round"/><path d="M1 5.2L4.2 2H17.5L14.3 5.2Z" fill="#daf4fc"/><rect x="1" y="5.2" width="13.3" height="13.5" rx="1" fill="#a6e3f7" stroke="#5fb3d3" stroke-width="0.6"/></g></svg>
<span style="left:36px;top:306.0px;font-size:15px;line-height:20px;color:#3f4447;">桌子腿<i style="font-style:normal;font-size:14.5px;letter-spacing:-0.5px">.PRT</i></span>
<svg style="left:18px;top:335px" width="9" height="11" viewBox="0 0 9 11"><path d="M0.5 0.5L8.5 5.5L0.5 10.5Z" fill="#8a8f91"/></svg>
<svg style="left:35.0px;top:329.5px" width="18" height="20" viewBox="0 0 18 20"><rect x="1" y="3.500" width="15.500" height="15.500" rx="1.500" fill="#eef0f1" stroke="#a9aeb0"/><path d="M5.500 3.500Q5.500 1 8.800 1Q12 1 12 3.500V5H5.500Z" fill="#f6f8f8" stroke="#8d9294" stroke-width="0.900"/><path d="M3.500 12L7 8.500H13L10 12Z" fill="#c6e8f5" stroke="#3da8d8" stroke-width="0.800"/><rect x="3.500" y="12" width="6.500" height="4" fill="#fff" stroke="#3da8d8" stroke-width="0.800"/><path d="M10 12L13 8.500V12.500L10 16Z" fill="#7cc8e8" stroke="#3da8d8" stroke-width="0.800"/><path d="M8 17L11 13.500H15.500L12.500 17Z" fill="#c9b6ee" stroke="#7d55c7" stroke-width="0.900"/></svg>
<span style="left:59.5px;top:330.0px;font-size:15px;line-height:20px;color:#3f4447;">设计项</span>
<svg style="left:34.5px;top:357.0px" width="18" height="12" viewBox="0 0 18 12"><path d="M4.500 1.500H16.500L13.500 10.500H1.500Z" fill="#fbf8f0" stroke="#94743a" stroke-width="1.500" stroke-linejoin="round"/></svg>
<span style="left:59.5px;top:354.0px;font-size:14.5px;line-height:20px;color:#3f4447;">RIGHT</span>
<svg style="left:34.5px;top:381.0px" width="18" height="12" viewBox="0 0 18 12"><path d="M4.500 1.500H16.500L13.500 10.500H1.500Z" fill="#fbf8f0" stroke="#94743a" stroke-width="1.500" stroke-linejoin="round"/></svg>
<span style="left:59.5px;top:378.0px;font-size:14.5px;line-height:20px;color:#3f4447;">TOP</span>
<svg style="left:34.5px;top:405.0px" width="18" height="12" viewBox="0 0 18 12"><path d="M4.500 1.500H16.500L13.500 10.500H1.500Z" fill="#fbf8f0" stroke="#94743a" stroke-width="1.500" stroke-linejoin="round"/></svg>
<span style="left:59.5px;top:402.0px;font-size:14.5px;line-height:20px;color:#3f4447;">FRONT</span>
<svg style="left:34.0px;top:425.0px" width="20" height="20" viewBox="0 0 20 20"><path d="M7 1.500V13.500H18.500M7 13.500L1.500 18.500" fill="none" stroke="#8a6a2f" stroke-width="1.400"/><path d="M5.500 3.500L7 0.500L8.500 3.500ZM16.500 12L19.500 13.500L16.500 15ZM1 16V19H4Z" fill="#8a6a2f"/></svg>
<span style="left:59.5px;top:426.0px;font-size:14.5px;line-height:20px;color:#3f4447;letter-spacing:-0.68px">PRT_CSYS_DEF</span>
<div style="left:9px;top:454.5px;width:327px;height:3px;background:#5cb947"></div>
<svg style="left:15.5px;top:473px" width="11" height="9" viewBox="0 0 11 9"><path d="M0.5 0.5H10.5L5.5 8.5Z" fill="#7d8284"/></svg>
<svg style="left:34.5px;top:467.0px" width="20" height="20" viewBox="0 0 20 20"><path d="M1.500 8L8.500 1.500H19L12 8Z" fill="#c6e8f5" stroke="#8fb9cc" stroke-width="0.800"/><path d="M12 8L19 1.500V12L12 18.500Z" fill="#5ea4c4" stroke="#4a8fb0" stroke-width="0.800"/><rect x="1.500" y="8" width="10.500" height="10.500" fill="#f7f9fa" stroke="#a9aeb0" stroke-width="0.900"/></svg>
<svg style="left:58.5px;top:469.7px" width="9" height="9" viewBox="0 0 9 9"><path d="M4.500 0.200V8.800M0.200 4.500H8.800M1.100 1.100L7.900 7.900M7.900 1.100L1.100 7.900" stroke="#eee400" stroke-width="1.500"/><rect x="2.700" y="2.700" width="3.600" height="3.600" fill="#fbf800"/></svg>
<span style="left:69px;top:469.0px;font-size:15px;line-height:20px;color:#3f4447;">拉伸 1</span>
<svg style="left:57.0px;top:491.5px" width="20" height="20" viewBox="0 0 20 20"><rect x="1.500" y="5.500" width="13" height="13" fill="#fbfcfc" stroke="#7a7f82" stroke-width="1.100"/><path d="M5 15.500L7 11L16.500 1.500L19 4L9.500 13.500Z" fill="#e9ebec" stroke="#6e7477" stroke-width="0.900"/><path d="M14.500 3.500L16.500 1.500L19 4L17 6Z" fill="#c0392b"/><path d="M5 15.500L6 13L7.500 14.500Z" fill="#3f4446"/></svg>
<svg style="left:81.8px;top:494.2px" width="9" height="9" viewBox="0 0 9 9"><path d="M4.500 0.200V8.800M0.200 4.500H8.800M1.100 1.100L7.900 7.900M7.900 1.100L1.100 7.900" stroke="#eee400" stroke-width="1.500"/><rect x="2.700" y="2.700" width="3.600" height="3.600" fill="#fbf800"/></svg>
<span style="left:92px;top:493.0px;font-size:15px;line-height:20px;color:#3f4447;">截面 1</span>
<div style="left:347px;top:199px;width:1225px;height:726px;background:#e8eaec"></div>
<svg style="left:0;top:0" width="1572" height="925" viewBox="0 0 1572 925"><defs><clipPath id="tri"><path d="M595.400 840.800H1110.900V325.300Z"/></clipPath></defs><path d="M595.400 840.800H1110.900V325.300Z" fill="#eec2ec"/><path d="M595.500 810V836.500M595.500 817.500H755M827 817.500H1098" stroke="#2a0a4e" stroke-width="1.100" fill="none"/><path d="M1090.500 326V634M1090.500 656V839.500M1084 325.500H1106" stroke="#2a0a4e" stroke-width="1.100" fill="none"/><rect x="601.300" y="816" width="5.500" height="3" fill="#2a0a4e"/><path d="M1089.300 829H1092.800V832L1091.500 836.500H1090.200Z" fill="#2a0a4e"/><path d="M1090.500 327L1092.800 336.500L1091.500 338H1089.300L1089.700 332Z" fill="#1fb01f"/><rect x="1098" y="816" width="6.500" height="3" fill="#1fb01f"/><path d="M1104.500 817.500H1110" stroke="#1fb01f" stroke-width="0.800"/><rect x="755" y="807" width="72" height="21" fill="#e6dfee"/><g transform="translate(771.5,812.3)" fill="none" stroke="#2a0a4e" stroke-width="1.100"><path d="M5.800 0.500H1L0.700 5.200Q3.500 3.500 5 5Q6.400 7 5 9.500L2.500 11.500L0.500 10"/><path d="M11 0V11.200"/><path d="M19 10.500V11.800" stroke-width="1.300"/><path d="M27.700 0.500Q25.700 0.500 25.700 3V8.500Q25.700 11.300 27.700 11.300Q29.700 11.300 29.700 8.500V3Q29.700 0.500 27.700 0.500Z"/><path d="M37.300 0.500Q35.300 0.500 35.300 3V8.500Q35.300 11.300 37.300 11.300Q39.300 11.300 39.300 8.500V3Q39.300 0.500 37.300 0.500Z"/></g><g clip-path="url(#tri)"><rect x="1055" y="634.300" width="72" height="21.700" fill="#e6dfee"/><g transform="translate(1070.8,639.5)" fill="none" stroke="#2a0a4e" stroke-width="1.100"><path d="M5.800 0.500H1L0.700 5.200Q3.500 3.500 5 5Q6.400 7 5 9.500L2.500 11.500L0.500 10"/><path d="M11 0V11.200"/><path d="M19 10.500V11.800" stroke-width="1.300"/><path d="M27.700 0.500Q25.700 0.500 25.700 3V8.500Q25.700 11.300 27.700 11.300Q29.700 11.300 29.700 8.500V3Q29.700 0.500 27.700 0.500Z"/><path d="M37.300 0.500Q35.300 0.500 35.300 3V8.500Q35.300 11.300 37.300 11.300Q39.300 11.300 39.300 8.500V3Q39.300 0.500 37.300 0.500Z"/></g></g><path d="M595.400 840.800L1110.900 325.300" stroke="#f3a021" stroke-width="1.700" fill="none"/><path d="M595.400 840.800H1110.900V325.300" stroke="#f3a021" stroke-width="2.300" fill="none" stroke-linejoin="miter"/><path d="M591 836.500L600 845.500M600 836.500L591 845.500" stroke="#1d9a96" stroke-width="2"/><circle cx="595.500" cy="841" r="2" fill="#3fbf62"/><path d="M985.300 716V739" stroke="#86d6ee" stroke-width="1.600"/><path d="M985.300 716H1009" stroke="#c43b4a" stroke-width="1.500"/><circle cx="985.300" cy="716" r="3" fill="#3be03b"/><circle cx="1009" cy="716" r="2" fill="#d63040"/><circle cx="985.300" cy="739.200" r="2.100" fill="#48e8f0"/></svg>
<div style="left:912px;top:206.5px;width:440px;height:36px;background:#f5f7f8;border:1px solid #9ea3a5;box-sizing:border-box"></div>
<div style="left:1320.5px;top:211px;width:27.5px;height:28px;background:#dcdfe0;border:1px solid #b8bdbf;box-sizing:border-box"></div>
<svg style="left:920.5px;top:214.5px" width="20" height="20" viewBox="0 0 20 20"><rect x="1" y="1" width="17" height="15.500" fill="#f7f9fa" stroke="#b8bdbf" stroke-width="0.900"/><circle cx="9" cy="9.5" r="5" fill="#f6fbfd" stroke="#2f86b8" stroke-width="1.500"/><path d="M13.5 14.0L18.0 18.5" stroke="#b3b8ba" stroke-width="3" stroke-linecap="round"/></svg>
<svg style="left:951.0px;top:214.5px" width="20" height="20" viewBox="0 0 20 20"><circle cx="8" cy="8" r="6.3" fill="#f6fbfd" stroke="#2f86b8" stroke-width="1.500"/><path d="M13.5 13.5L18.0 18.0" stroke="#b3b8ba" stroke-width="3" stroke-linecap="round"/><path d="M8 4.500V11.500M4.500 8H11.500" stroke="#1f6fa6" stroke-width="2.200"/></svg>
<svg style="left:982.0px;top:214.5px" width="20" height="20" viewBox="0 0 20 20"><circle cx="8" cy="8" r="6.3" fill="#f6fbfd" stroke="#2f86b8" stroke-width="1.500"/><path d="M13.5 13.5L18.0 18.0" stroke="#b3b8ba" stroke-width="3" stroke-linecap="round"/><path d="M4.500 8H11.500" stroke="#1f6fa6" stroke-width="2.200"/></svg>
<svg style="left:1014.0px;top:215.5px" width="19" height="18" viewBox="0 0 19 18"><rect x="0.500" y="0.500" width="18" height="17" fill="#f7f9fa" stroke="#b8bdbf"/><rect x="0.500" y="0.500" width="18" height="2.200" fill="#c9cdcf"/><path d="M18.500 3V17.500H3Z" fill="#8cc6de"/><path d="M18.500 8V17.500H9Z" fill="#bfe0ee"/><path d="M3 17.500L18.500 3" stroke="#2b7fa8" stroke-width="1.600"/></svg>
<svg style="left:1044.0px;top:214.5px" width="21" height="20" viewBox="0 0 21 20"><path d="M1.500 5.500L6 1.500H18.500L14 5.500Z" fill="#d4edf7" stroke="#1f6a96" stroke-width="1.200" stroke-linejoin="round"/><path d="M14 5.500L18.500 1.500V14L14 18.500Z" fill="#5aa6c8" stroke="#1f6a96" stroke-width="1.200" stroke-linejoin="round"/><rect x="1.500" y="5.500" width="12.500" height="13" fill="#fff" stroke="#1f6a96" stroke-width="1.400"/><path d="M20.500 16.500V20H17Z" fill="#8d9294"/></svg>
<svg style="left:1075.0px;top:214.5px" width="21" height="20" viewBox="0 0 21 20"><path d="M1.500 7L6 1.500H14L18 6.500V14L13 18.500H5.500L1.500 13Z" fill="#d4edf7" stroke="#4aa3c8" stroke-width="1.100"/><path d="M14 1.500L18 6.500V14L13 12Z" fill="#5aa6c8"/><path d="M1.500 7L13 12L13 18.500M13 12L18 6.500" fill="none" stroke="#7fc3de" stroke-width="0.900"/><rect x="11.500" y="10.500" width="6" height="8" fill="#f4f6f7" stroke="#8d9294" stroke-width="0.800"/><path d="M14.500 12V17M13 13.500L14.500 12L16 13.500M13 15.500L14.500 17L16 15.500" fill="none" stroke="#6e7477" stroke-width="0.700"/><path d="M20.500 16.500V20H17Z" fill="#8d9294"/></svg>
<svg style="left:1106.5px;top:214.5px" width="20" height="20" viewBox="0 0 20 20"><rect x="0.500" y="1" width="15.500" height="15" fill="#f7f9fa" stroke="#b3b8ba" stroke-width="0.900"/><path d="M0.500 4.500H16M0.500 8.500H16M0.500 12.500H16M5 1V16" stroke="#b3b8ba" stroke-width="0.900"/><path d="M6 10.500H9L10 9H14.500L15.500 10.500H18.500Q19.500 10.500 19.500 11.500V18.500H6Z" fill="#3f4446"/><circle cx="12.500" cy="14.500" r="2.800" fill="#8d9294" stroke="#e9ebec" stroke-width="0.900"/></svg>
<svg style="left:1137.0px;top:214.5px" width="22" height="20" viewBox="0 0 22 20"><path d="M1 1L5.500 5.500M5.500 1L1 5.500" stroke="#8a7a1f" stroke-width="1.500"/><path d="M10.500 0.500L8.500 4.500M7.500 7L5.500 11M4.500 13.500L2.500 17.500" stroke="#8a7a1f" stroke-width="1.700"/><path d="M13 6V15H20M13 15L8.500 18.500" fill="none" stroke="#6b5a1a" stroke-width="1.400"/><path d="M11.500 7.500L13 4.500L14.500 7.500ZM18.500 13.500L21 15L18.500 16.500ZM8 16.500V19.500H11Z" fill="#6b5a1a"/><path d="M22 16.500V20H18.500Z" fill="#8d9294"/></svg>
<svg style="left:1169.0px;top:214.5px" width="20" height="20" viewBox="0 0 20 20"><path d="M1.500 12L5 9.500H12L8.500 12Z" fill="#c6e8f5" stroke="#2f86b8"/><rect x="1.500" y="12" width="7" height="4" fill="#7cc8e8" stroke="#2f86b8"/><path d="M4.500 15.500L8 13H15L11.500 15.500Z" fill="#c6e8f5" stroke="#2f86b8"/><rect x="4.500" y="15.500" width="7" height="4" fill="#8cc6de" stroke="#2f86b8"/><path d="M11.500 15.500L15 13V17L11.500 19.500Z" fill="#2f86b8"/><path d="M4.500 8V6.500Q4.500 4 7 4H9" fill="none" stroke="#3f4446" stroke-width="1.700"/><path d="M8.500 1.200L12 4L8.500 6.800Z" fill="#3f4446"/><path d="M14.500 1.500H19V11H15.500" fill="none" stroke="#8d9294" stroke-width="1.300"/></svg>
<svg style="left:1199.0px;top:214.5px" width="21" height="20" viewBox="0 0 21 20"><path d="M1.500 8L7 1.500H19.500L14 8Z" fill="#d4edf7" stroke="#9fb5bf" stroke-width="0.800"/><path d="M14 8L19.500 1.500V12L14 18.500Z" fill="#c5cdd1" stroke="#9fb5bf" stroke-width="0.800"/><rect x="1.500" y="8" width="12.500" height="10.500" fill="#e6f0f4" stroke="#9fb5bf" stroke-width="0.800"/><rect x="1.500" y="8" width="12.500" height="5.500" fill="#bfe3f0"/></svg>
<svg style="left:1230.0px;top:214.5px" width="21" height="20" viewBox="0 0 21 20"><path d="M1 4.500L9 1.500L20 2.500V15L11 19.500L3 15.500Z" fill="#cfeaf5" stroke="#5aa6c8" stroke-width="1"/><path d="M9 1.500L8.500 9L3 15.500M8.500 9L20 15" fill="none" stroke="#5aa6c8" stroke-width="0.900"/><path d="M5 7.500L16 6.500V14L9 16.500Z" fill="#9fd3e8" stroke="#4a96b8" stroke-width="0.800"/></svg>
<svg style="left:1260.5px;top:213.5px" width="23" height="22" viewBox="0 0 23 22"><path d="M2 0.500V13M16.500 0.500V13" stroke="#3f4446" stroke-width="1.300"/><path d="M3 4H15.500" stroke="#3f4446" stroke-width="1.300"/><path d="M2.500 4L6 1.800V6.200ZM16 4L12.500 1.800V6.200Z" fill="#3f4446"/><path d="M6.500 11H12.500M9.500 6.500V11M7.500 6.500H11.500" stroke="#2f9fc8" stroke-width="1.500"/><circle cx="2" cy="16.500" r="1.600" fill="#eceeef" stroke="#a9aeb0" stroke-width="0.700"/><path d="M7.500 17.500Q13.500 12 19.500 17.500Q13.500 23 7.500 17.500Z" fill="#3f4446"/><circle cx="13.500" cy="17.500" r="2.100" fill="#d5d8da"/><circle cx="13.500" cy="17.500" r="1" fill="#3f4446"/><path d="M23 18.500V22H19.500Z" fill="#8d9294"/></svg>
<svg style="left:1292.5px;top:213.5px" width="21" height="22" viewBox="0 0 21 22"><rect x="0.500" y="1" width="10.500" height="6.500" fill="#f7f6cf" stroke="#9a9c7a" stroke-width="0.900"/><path d="M11 4H18V9" fill="none" stroke="#3f4446" stroke-width="1.400"/><path d="M14.500 8.500H21L17.800 12.500Z" fill="#3f4446"/><path d="M7.500 17Q13.500 11.500 19.500 17Q13.500 22.500 7.500 17Z" fill="#3f4446"/><circle cx="13.500" cy="17" r="2.100" fill="#d5d8da"/><circle cx="13.500" cy="17" r="1" fill="#3f4446"/></svg>
<svg style="left:1324.0px;top:214.5px" width="20" height="20" viewBox="0 0 20 20"><path d="M4 3.500L10 10.500L16 8.500M10 10.500L4 16.500" fill="none" stroke="#4e5356" stroke-width="1.500"/><circle cx="4" cy="3.500" r="2.300" fill="#6bb56b" stroke="#4a964a" stroke-width="0.700"/><circle cx="16.300" cy="8.500" r="2.300" fill="#e86a6a" stroke="#c04a4a" stroke-width="0.700"/><circle cx="4" cy="16.500" r="2.300" fill="#3a9cc0" stroke="#2a7f9f" stroke-width="0.700"/></svg>
<span style="left:1092.6px;top:881.5px;font-size:26.25px;line-height:30px;color:#a9abad;letter-spacing:0.1px">dooooit@dooooit_7000005</span>
</body></html>
